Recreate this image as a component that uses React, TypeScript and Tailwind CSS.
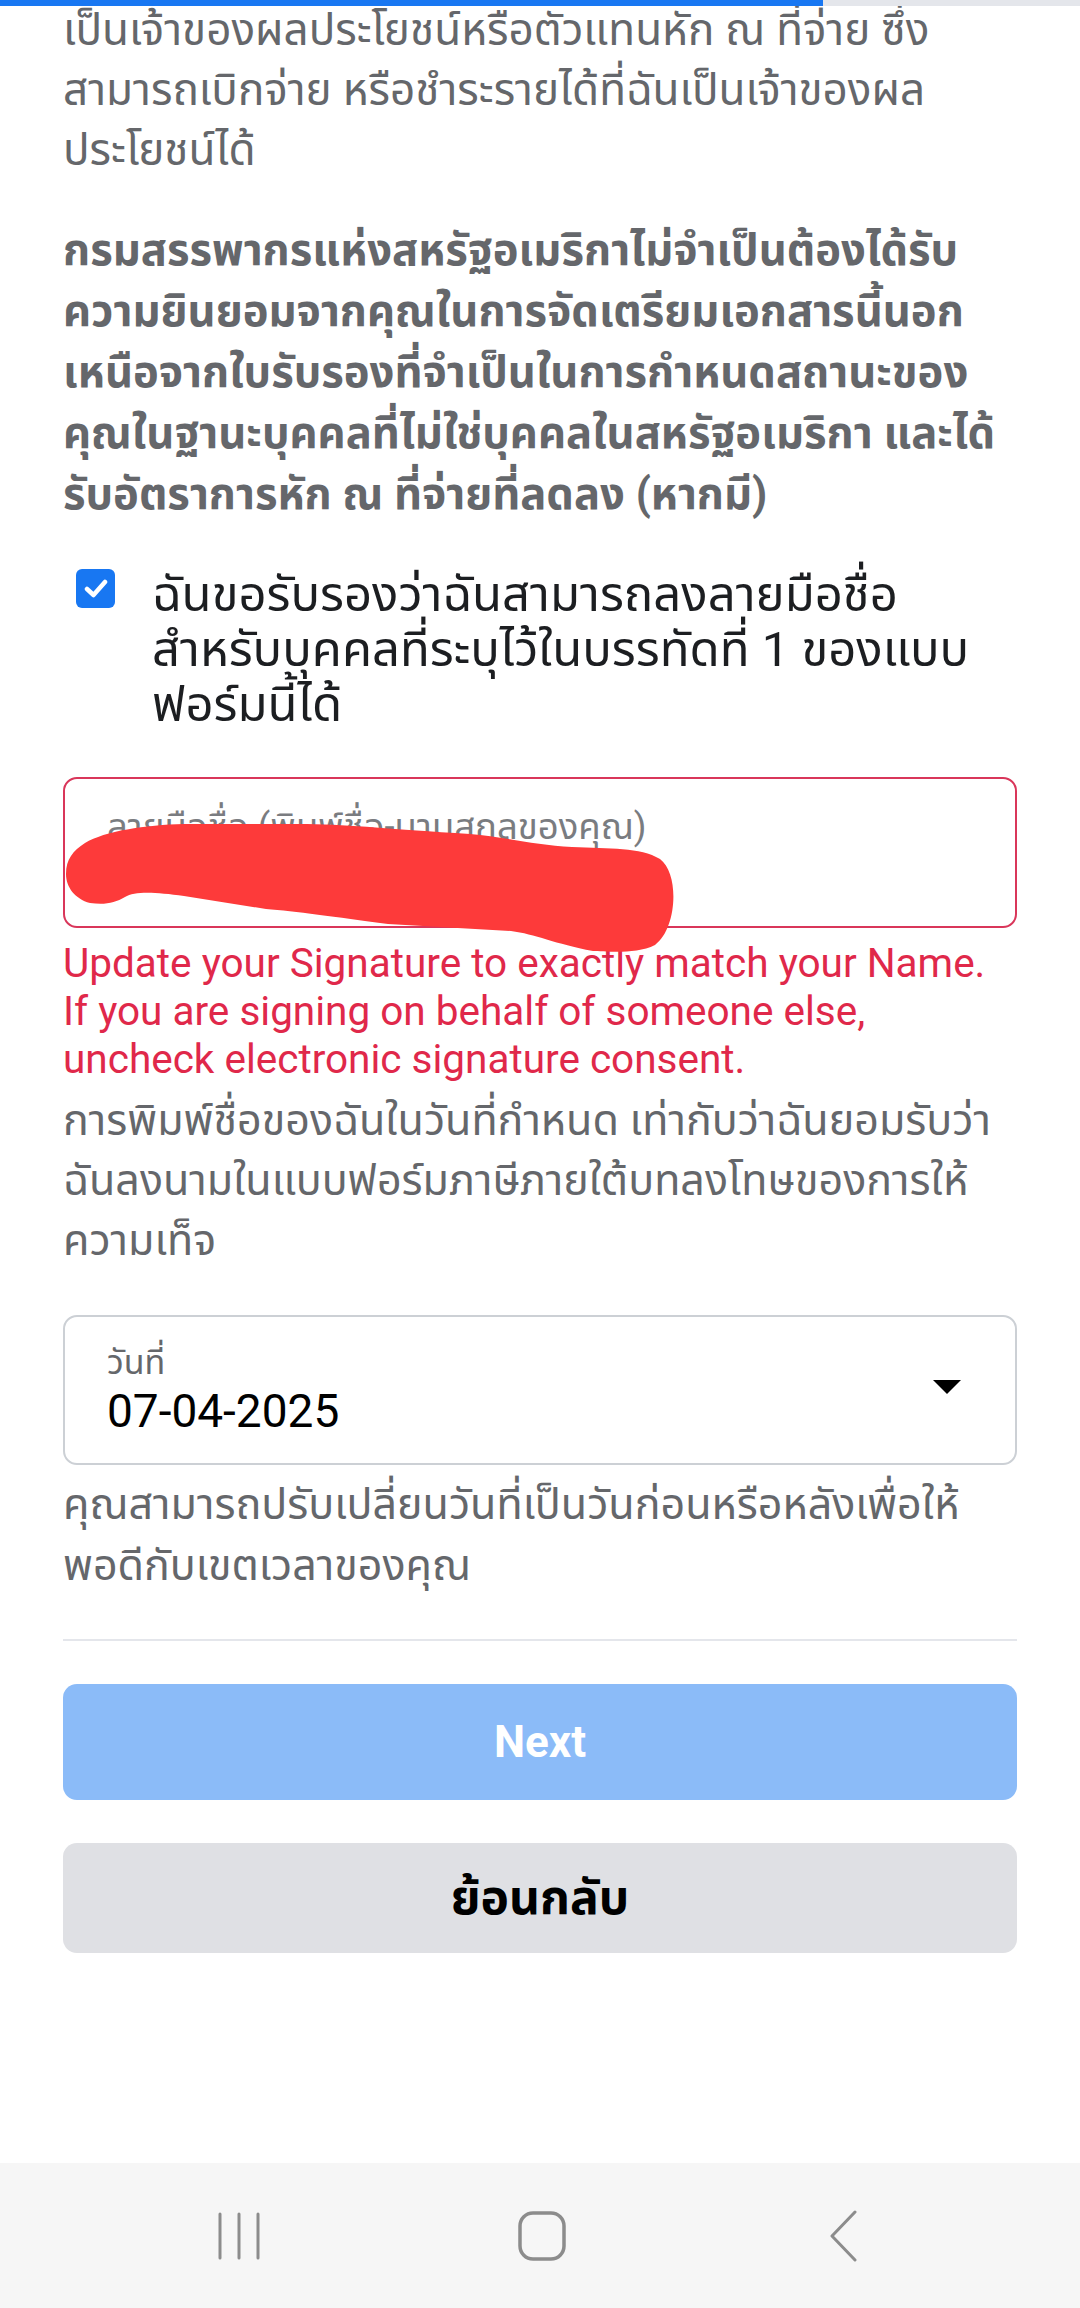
const thai = "font-['Roboto','Noto_Sans_Thai','Noto_Sans',sans-serif]"

function NavBar() {
  return (
    <div className="mt-auto flex h-[145px] w-full items-center bg-[#f6f6f6] pl-[89px]">
      <div className="flex w-[302px] justify-center">
        <svg width="44" height="48" viewBox="0 0 44 48" className="text-[#8c8c8c]">
          <line x1="2" y1="2" x2="2" y2="46" stroke="currentColor" strokeWidth="3" strokeLinecap="round" />
          <line x1="21" y1="2" x2="21" y2="46" stroke="currentColor" strokeWidth="3" strokeLinecap="round" />
          <line x1="40" y1="2" x2="40" y2="46" stroke="currentColor" strokeWidth="3" strokeLinecap="round" />
        </svg>
      </div>
      <div className="flex w-[302px] justify-center">
        <svg width="48" height="50" viewBox="0 0 48 50" className="text-[#8c8c8c]">
          <rect x="2" y="2" width="44" height="46" rx="13" fill="none" stroke="currentColor" strokeWidth="3.5" />
        </svg>
      </div>
      <div className="flex w-[302px] justify-center">
        <svg width="30" height="52" viewBox="0 0 30 52" className="text-[#8c8c8c]">
          <polyline points="26,2 3,26 26,50" fill="none" stroke="currentColor" strokeWidth="3" strokeLinecap="round" strokeLinejoin="round" />
        </svg>
      </div>
    </div>
  )
}

export default function App() {
  return (
    <div className={`relative flex min-h-[2308px] w-[1080px] flex-col bg-white ${thai}`}>
      <div className="absolute left-0 top-0 flex h-[6px] w-full">
        <div className="w-[823px] bg-[#1877f2]" />
        <div className="flex-1 bg-[#e4e6eb]" />
      </div>

      <div className="flex flex-col px-[63px]">
        <p className="text-[44px] leading-[60px] text-[#65676b]">
          เป็นเจ้าของผลประโยชน์หรือตัวแทนหัก ณ ที่จ่าย ซึ่ง
          <br />
          สามารถเบิกจ่าย หรือชำระรายได้ที่ฉันเป็นเจ้าของผล
          <br />
          ประโยชน์ได้
        </p>

        <p className="mt-[40px] text-[43.5px] font-bold leading-[61px] text-[#65676b]">
          กรมสรรพากรแห่งสหรัฐอเมริกาไม่จำเป็นต้องได้รับ
          <br />
          ความยินยอมจากคุณในการจัดเตรียมเอกสารนี้นอก
          <br />
          เหนือจากใบรับรองที่จำเป็นในการกำหนดสถานะของ
          <br />
          คุณในฐานะบุคคลที่ไม่ใช่บุคคลในสหรัฐอเมริกา และได้
          <br />
          รับอัตราการหัก ณ ที่จ่ายที่ลดลง (หากมี)
        </p>

        <label className="mt-[42px] flex gap-[37px] pl-[13px]">
          <span className="mt-[2px] flex h-[39px] w-[39px] shrink-0 items-center justify-center rounded-[6px] bg-[#1877f2]">
            <svg width="24" height="20" viewBox="0 0 24 20">
              <polyline points="3,10 9.5,16 21,3" fill="none" stroke="white" strokeWidth="4.5" strokeLinecap="round" strokeLinejoin="round" />
            </svg>
          </span>
          <span className="text-[49px] leading-[55px] text-[#1c1e21]">
            ฉันขอรับรองว่าฉันสามารถลงลายมือชื่อ
            <br />
            สำหรับบุคคลที่ระบุไว้ในบรรทัดที่ 1 ของแบบ
            <br />
            ฟอร์มนี้ได้
          </span>
        </label>

        <div className="relative mt-[45px] h-[151px] rounded-[14px] border-[2.5px] border-[#d9365a] px-[42px] pt-[26px]">
          <div className="text-[36.5px] leading-[44px] text-[#7a7c80]">ลายมือชื่อ (พิมพ์ชื่อ-นามสกุลของคุณ)</div>
          {/* redaction scribble over the typed name */}
          <svg className="absolute left-0 top-0" width="620" height="180" viewBox="0 0 620 180">
            <path
              d="M1,95 C1,80 8,72 20,64 C40,52 80,46 119,45 L242,45 C290,46 323,50 405,55 C440,58 470,66 507,68 C545,70 575,68 595,80 C615,95 612,150 590,166 C570,176 540,172 528,172 C490,165 470,155 446,152 L323,145 C270,138 230,132 201,130 L119,117 C90,113 70,112 60,118 C50,124 40,126 25,124 C10,120 1,108 1,95 Z"
              fill="#fd3a3a"
            />
          </svg>
        </div>

        <p className="mt-[11px] font-['Roboto',sans-serif] text-[40.5px] leading-[48px] text-[#e0284a]">
          Update your Signature to exactly match your Name.
          <br />
          If you are signing on behalf of someone else,
          <br />
          uncheck electronic signature consent.
        </p>

        <p className="mt-[7px] text-[43px] leading-[60px] text-[#65676b]">
          การพิมพ์ชื่อของฉันในวันที่กำหนด เท่ากับว่าฉันยอมรับว่า
          <br />
          ฉันลงนามในแบบฟอร์มภาษีภายใต้บทลงโทษของการให้
          <br />
          ความเท็จ
        </p>

        <div className="mt-[45px] flex h-[150px] items-center justify-between rounded-[14px] border-2 border-[#ccd0d5] pl-[42px] pr-[54px]">
          <div className="flex flex-col">
            <span className="text-[34px] leading-[42px] text-[#65676b]">วันที่</span>
            <span className="text-[46px] leading-[56px] text-black">07-04-2025</span>
          </div>
          <svg width="28" height="14" viewBox="0 0 28 14" className="mb-[6px]">
            <polygon points="0,0 28,0 14,14" fill="#000" />
          </svg>
        </div>

        <p className="mt-[9px] text-[43px] leading-[61px] text-[#65676b]">
          คุณสามารถปรับเปลี่ยนวันที่เป็นวันก่อนหรือหลังเพื่อให้
          <br />
          พอดีกับเขตเวลาของคุณ
        </p>

        <div className="mt-[43px] h-[2px] bg-[#e4e6eb]" />

        <button className="mt-[43px] flex h-[116px] items-center justify-center rounded-[14px] bg-[#8bbbf8] text-[44px] font-bold text-white">
          Next
        </button>

        <button className="mt-[43px] flex h-[110px] items-center justify-center rounded-[14px] bg-[#dfe0e4] text-[48px] font-bold text-black">
          ย้อนกลับ
        </button>
      </div>

      <NavBar />
    </div>
  )
}
